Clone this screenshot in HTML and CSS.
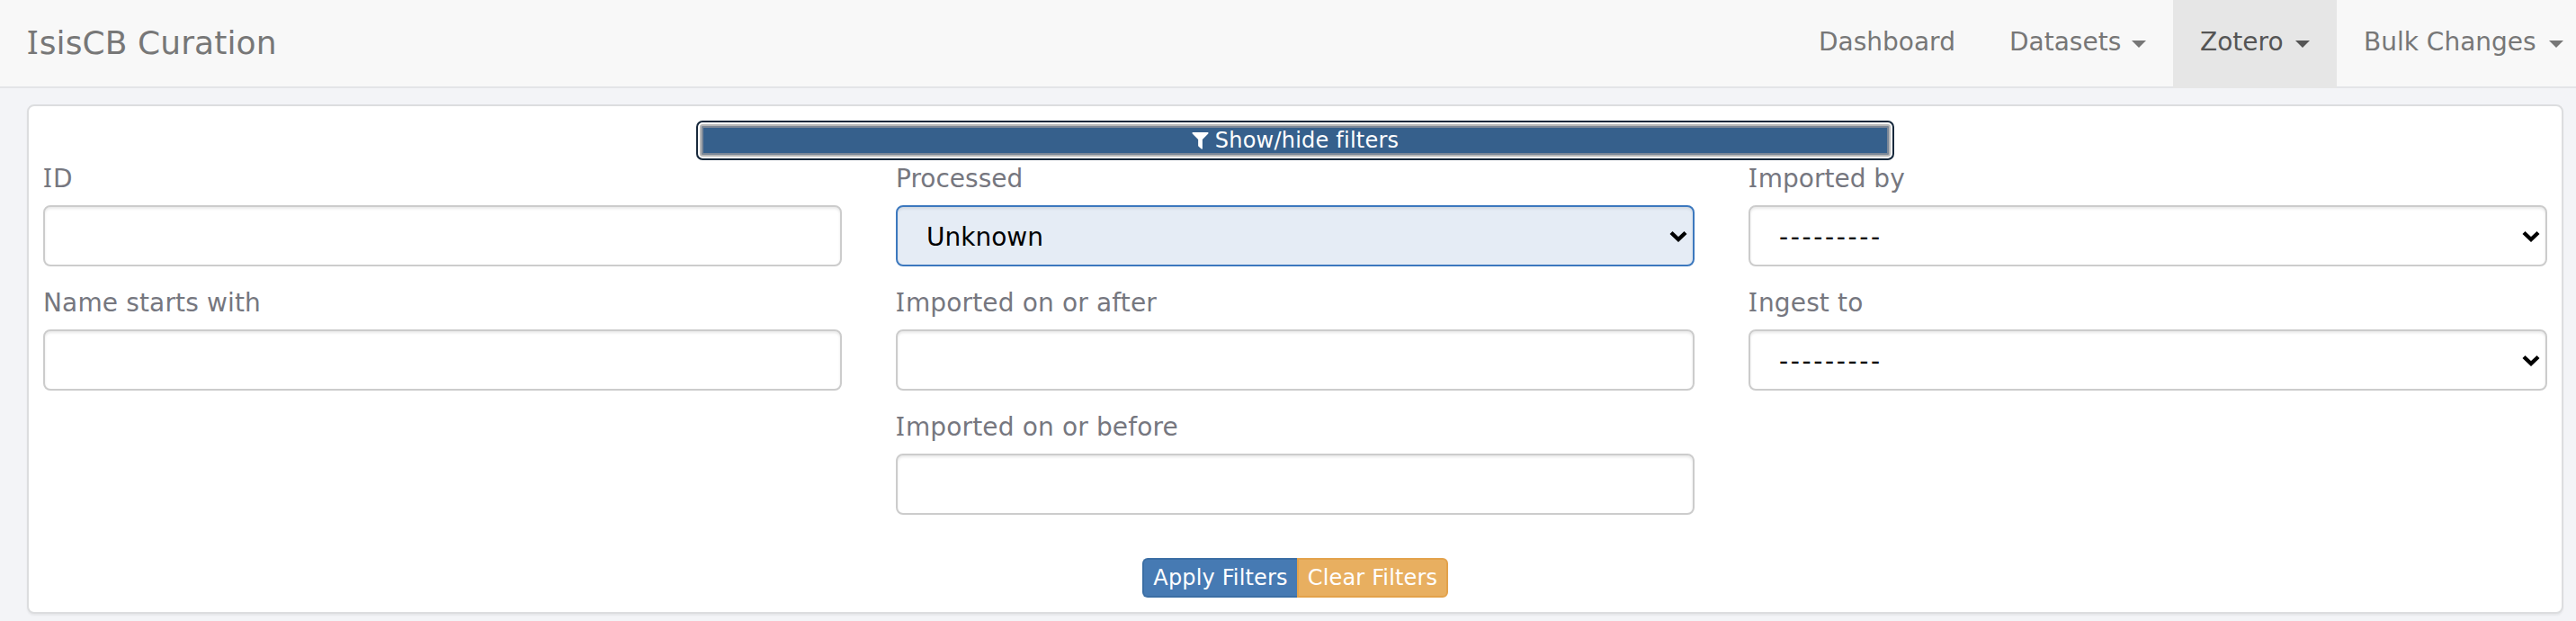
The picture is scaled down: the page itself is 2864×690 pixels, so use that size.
FILE: index.html
```html
<!DOCTYPE html>
<html lang="en">
<head>
<meta charset="utf-8">
<title>IsisCB Curation</title>
<link rel="stylesheet" href="styles.css">
</head>
<body>
<nav class="navbar">
  <a class="brand"><span class="cap-i">I</span>sisCB Curation</a>
  <div class="nav">
    <a class="nav-item dashboard"><span>Dashboard</span></a>
    <a class="nav-item datasets"><span>Datasets</span><i class="caret"></i></a>
    <a class="nav-item zotero active"><span>Zotero</span><i class="caret"></i></a>
    <a class="nav-item bulk"><span>Bulk Changes</span><i class="caret"></i></a>
  </div>
</nav>
<main class="panel">
  <button class="toggle"><svg class="funnel" viewBox="0 0 20 20"><path d="M1 0H19Q20 .6 19.3 1.5L12.500 8.500V19Q12.300 20 11.300 19.500L8 16.500Q7.500 16 7.500 15.500V8.500L.7 1.500Q0 .6 1 0Z" fill="#fff"/></svg><span>Show/hide filters</span></button>
  <form class="filters">
    <div class="column">
      <label class="field"><span class="label"><span class="cap-i">I</span>D</span><input class="control" type="text"></label>
      <label class="field"><span class="label">Name starts with</span><input class="control" type="text"></label>
    </div>
    <div class="column">
      <label class="field"><span class="label tight">Processed</span><span class="select-wrap"><select class="control selected"><option>Unknown</option></select><svg class="chevron" viewBox="0 0 20 13"><path d="M2 2.500L10 10L18 2.500" fill="none" stroke="#000" stroke-width="4.400"/></svg></span></label>
      <label class="field"><span class="label"><span class="cap-i">I</span>mported on or after</span><input class="control" type="text"></label>
      <label class="field"><span class="label"><span class="cap-i">I</span>mported on or before</span><input class="control" type="text"></label>
    </div>
    <div class="column">
      <label class="field"><span class="label tight"><span class="cap-i">I</span>mported by</span><span class="select-wrap"><select class="control dashes"><option>---------</option></select><svg class="chevron" viewBox="0 0 20 13"><path d="M2 2.500L10 10L18 2.500" fill="none" stroke="#000" stroke-width="4.400"/></svg></span></label>
      <label class="field"><span class="label"><span class="cap-i">I</span>ngest to</span><span class="select-wrap"><select class="control dashes"><option>---------</option></select><svg class="chevron" viewBox="0 0 20 13"><path d="M2 2.500L10 10L18 2.500" fill="none" stroke="#000" stroke-width="4.400"/></svg></span></label>
    </div>
  </form>
  <div class="actions"><button class="btn apply">Apply Filters</button><button class="btn clear">Clear Filters</button></div>
</main>
</body>
</html>
```
FILE: styles.css
```css
* { box-sizing: border-box; }
body {
  margin: 0;
  height: 690px;
  overflow: hidden;
  background: #f3f4f7;
  font-family: "DejaVu Sans", Verdana, sans-serif;
  font-size: 28px;
  color: #76777f;
}
.cap-i {
  font-family: "Noto Sans", sans-serif;
  font-size: 1.03em;
  line-height: 0;
  margin-right: 1px;
}
.navbar {
  display: flex;
  justify-content: space-between;
  height: 98px;
  padding-left: 30px;
  background: #f8f8f8;
  border-bottom: 2px solid #e4e5e8;
  color: #777;
}
.brand { font-size: 36px; line-height: 96px; letter-spacing: .1px; }
.nav { display: flex; }
.nav-item {
  display: flex;
  align-items: center;
  justify-content: space-between;
  height: 98px;
  line-height: 94px;
  padding: 0 30px;
  white-space: nowrap;
}
.nav-item span { height: 98px; }
.dashboard { width: 212px; }
.datasets { width: 212px; }
.zotero { width: 182px; }
.bulk { width: 266px; padding-right: 14px; }
.active { background: #e6e6e6; color: #555; }
.caret {
  border: 8px solid transparent;
  border-top-color: currentColor;
  border-bottom: 0;
}
.panel {
  display: flex;
  flex-direction: column;
  align-items: center;
  height: 566px;
  margin: 18px 14px 0 30px;
  padding: 16px 16px 0;
  background: #fff;
  border: 2px solid #dcdddf;
  border-radius: 8px;
  box-shadow: 0 2px 2px rgba(0, 0, 0, .05);
}
.toggle {
  display: flex;
  align-items: center;
  justify-content: center;
  gap: 7px;
  width: 1332px;
  height: 44px;
  flex: none;
  padding: 0;
  color: #fff;
  background: #36608c;
  border: 2px solid #18293c;
  border-radius: 7px;
  box-shadow: inset 0 0 0 2px #fff, inset 0 0 0 4px #b8b8b8, inset 0 0 0 6px #7b8797;
  font: 24px/40px "DejaVu Sans", sans-serif;
  letter-spacing: .22px;
}
.funnel { width: 19px; height: 19px; }
.filters {
  display: grid;
  grid-template-columns: repeat(3, 1fr);
  column-gap: 60px;
  width: 100%;
  height: 442px;
}
.field { display: block; height: 138px; }
.label { display: block; height: 50px; line-height: 42px; letter-spacing: .15px; white-space: nowrap; }
.tight { letter-spacing: 0; }
.control {
  display: block;
  width: 100%;
  height: 68px;
  margin: 0;
  padding: 2px 32px 0;
  appearance: none;
  background: #fff;
  border: 2px solid #ccc;
  border-radius: 8px;
  box-shadow: inset 0 2px 3px rgba(0, 0, 0, .09);
  color: #000;
  font: 28px "DejaVu Sans", sans-serif;
}
.selected { background: #e5ecf5; border-color: #3c78be; }
.dashes { letter-spacing: 2.65px; }
.select-wrap { display: grid; align-items: center; }
.select-wrap > * { grid-area: 1 / 1; }
.chevron { width: 20px; height: 13px; justify-self: end; margin-right: 8px; }
.actions { display: flex; }
.btn {
  height: 44px;
  padding: 0;
  color: #fff;
  border: 2px solid;
  font: 24px/40px "DejaVu Sans", sans-serif;
  letter-spacing: .15px;
}
.apply { width: 172px; background: #467ab3; border-color: #3b6ea4; border-right: 0; border-radius: 6px 0 0 6px; }
.clear { width: 168px; background: #e8af60; border-color: #e3a24b; border-radius: 0 6px 6px 0; }
```
